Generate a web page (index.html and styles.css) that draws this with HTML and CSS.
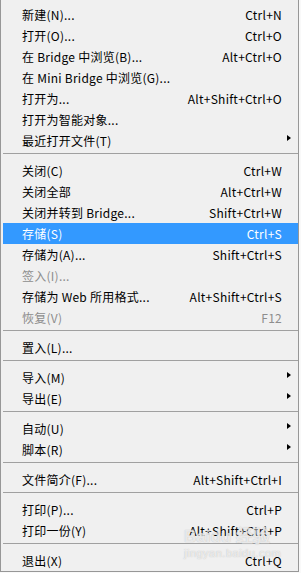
FILE: index.html
```html
<!DOCTYPE html>
<html lang="zh-CN">
<head>
    <meta charset="UTF-8">
    <meta name="viewport" content="width=device-width, initial-scale=1.0">
    <title>文件菜单</title>
    <link rel="stylesheet" href="styles.css">
</head>
<body>

    <div class="menu">
        <div class="item"><span class="label">新建(N)...</span><span class="key">Ctrl+N</span></div>
        <div class="item"><span class="label">打开(O)...</span><span class="key">Ctrl+O</span></div>
        <div class="item"><span class="label">在 Bridge 中浏览(B)...</span><span class="key">Alt+Ctrl+O</span></div>
        <div class="item"><span class="label">在 Mini Bridge 中浏览(G)...</span></div>
        <div class="item"><span class="label">打开为...</span><span class="key">Alt+Shift+Ctrl+O</span></div>
        <div class="item"><span class="label">打开为智能对象...</span></div>
        <div class="item"><span class="label">最近打开文件(T)</span><span class="arrow"></span></div>
        <div class="sep"></div>
        <div class="item"><span class="label">关闭(C)</span><span class="key">Ctrl+W</span></div>
        <div class="item"><span class="label">关闭全部</span><span class="key">Alt+Ctrl+W</span></div>
        <div class="item"><span class="label">关闭并转到 Bridge...</span><span class="key">Shift+Ctrl+W</span></div>
        <div class="item active"><span class="label">存储(S)</span><span class="key">Ctrl+S</span></div>
        <div class="item"><span class="label">存储为(A)...</span><span class="key">Shift+Ctrl+S</span></div>
        <div class="item disabled"><span class="label">签入(I)...</span></div>
        <div class="item"><span class="label">存储为 Web 所用格式...</span><span class="key">Alt+Shift+Ctrl+S</span></div>
        <div class="item disabled"><span class="label">恢复(V)</span><span class="key">F12</span></div>
        <div class="sep"></div>
        <div class="item"><span class="label">置入(L)...</span></div>
        <div class="sep"></div>
        <div class="item"><span class="label">导入(M)</span><span class="arrow"></span></div>
        <div class="item"><span class="label">导出(E)</span><span class="arrow"></span></div>
        <div class="sep"></div>
        <div class="item"><span class="label">自动(U)</span><span class="arrow"></span></div>
        <div class="item"><span class="label">脚本(R)</span><span class="arrow"></span></div>
        <div class="sep"></div>
        <div class="item"><span class="label">文件简介(F)...</span><span class="key">Alt+Shift+Ctrl+I</span></div>
        <div class="sep"></div>
        <div class="item"><span class="label">打印(P)...</span><span class="key">Ctrl+P</span></div>
        <div class="item"><span class="label">打印一份(Y)</span><span class="key">Alt+Shift+Ctrl+P</span></div>
        <div class="sep"></div>
        <div class="item"><span class="label">退出(X)</span><span class="key">Ctrl+Q</span></div>

        <!-- 水印 -->
        <div class="watermark">
            <div class="wm-logo">Baidu 经验</div>
            <div class="wm-url">jingyan.baidu.com</div>
        </div>
    </div>

</body>
</html>
```

FILE: styles.css
```css
body {
    margin: 0;
    background-color: #f9f9f9;
    font-family: "Noto Sans CJK SC", "Noto Sans", sans-serif;
    font-size: 12px;
    color: #000;
}
.menu {
    position: relative;
    width: 295px;
    padding: 4px 0 0 2px;
    background-color: #f0f0f0;
    border-left: 1px solid #979797;
    border-right: 1px solid #979797;
    border-bottom: 1px solid #979797;
}
.item {
    display: flex;
    align-items: center;
    height: 21px;
    padding: 0 7px 0 19px;
    white-space: nowrap;
    letter-spacing: 0.25px;
}
.item .label {
    flex: 1;
}
.item .key {
    margin-right: 9px;
}
.item.active {
    background-color: #3399ff;
    color: #fff;
}
.item.disabled {
    color: #8d8d8d;
}
.arrow {
    width: 0;
    height: 0;
    margin-bottom: 6px;
    border-left: 4px solid #000;
    border-top: 3.5px solid transparent;
    border-bottom: 3.5px solid transparent;
}
.sep {
    height: 1px;
    margin: 2px 0 6px;
    background-color: #a0a0a0;
}
.watermark {
    position: absolute;
    left: 183px;
    top: 528px;
    color: rgba(255, 255, 255, 0.7);
    text-shadow: 0 0 1px rgba(120, 120, 120, 0.5);
    pointer-events: none;
}
.wm-logo {
    font-family: "Liberation Sans", sans-serif;
    font-size: 17px;
    font-weight: bold;
    line-height: 18px;
}
.wm-url {
    font-family: "Liberation Sans", sans-serif;
    font-size: 11px;
    line-height: 14px;
    letter-spacing: 0.5px;
}
```
